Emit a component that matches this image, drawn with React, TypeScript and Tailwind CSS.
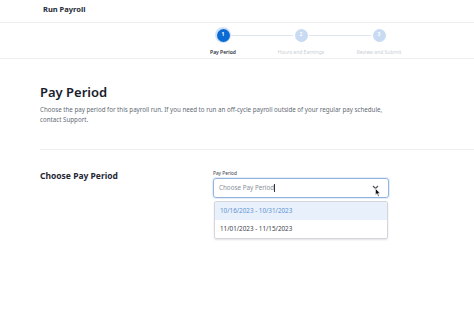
export default function App() {
  const steps = [
    { n: 1, label: "Pay Period", active: true },
    { n: 2, label: "Hours and Earnings", active: false },
    { n: 3, label: "Review and Submit", active: false },
  ];

  return (
    <div className="w-[474px] h-[316px] bg-white overflow-hidden font-['Noto_Sans',sans-serif] text-[#1c2431]">
      {/* header */}
      <header className="h-[23px] border-b border-[#eceef1] pl-[43px] pt-[4px] flex items-start">
        <span className="text-[7.5px] font-bold leading-[11px] text-[#232a36]">Run Payroll</span>
      </header>

      {/* stepper */}
      <div className="h-[36px] border-b border-[#eceef1] pl-[184px] flex">
        {steps.map((s, i) => (
          <div key={s.n} className="w-[78px] flex flex-col items-center pt-[4px]">
            <div className="w-full flex items-center">
              <div className={`flex-1 h-px ${i === 0 ? "bg-transparent" : "bg-[#dfe5ed]"}`} />
              <div
                className={`w-[16px] h-[16px] rounded-full flex items-center justify-center ${
                  s.active ? "bg-[#d3e4f8]" : "bg-transparent"
                }`}
              >
                <div
                  className={`w-[13px] h-[13px] rounded-full flex items-center justify-center text-[5px] font-bold text-white ${
                    s.active ? "bg-[#0b6bd4]" : "bg-[#c8dbf2]"
                  }`}
                >
                  {s.n}
                </div>
              </div>
              <div className={`flex-1 h-px ${i === steps.length - 1 ? "bg-transparent" : "bg-[#dfe5ed]"}`} />
            </div>
            <span
              className={`mt-[6px] text-[5px] leading-[7px] whitespace-nowrap ${
                s.active ? "font-semibold text-[#2a313c]" : "text-[#c9ced5]"
              }`}
            >
              {s.label}
            </span>
          </div>
        ))}
      </div>

      {/* main */}
      <main className="pl-[40px]">
        <h1 className="mt-[25px] text-[13px] leading-[16px] font-semibold text-[#18202c]">Pay Period</h1>
        <p className="mt-[5px] w-[360px] text-[6.2px] leading-[10px] text-[#646b76]">
          Choose the pay period for this payroll run. If you need to run an off-cycle payroll outside of your regular pay
          schedule, contact Support.
        </p>
        <div className="mt-[24px] border-t border-[#eceef1]" />

        <div className="flex mt-[20px]">
          <div className="w-[173px] text-[8.5px] leading-[11px] font-bold text-[#1f2733]">Choose Pay Period</div>
          <div className="w-[176px]">
            <div className="text-[4.8px] leading-[7px] text-[#3a414c]">Pay Period</div>
            <div className="relative mt-[1px] h-[20px] rounded-[3px] border-[1.5px] border-[#94b6de] shadow-[0_0_0_1px_#e3edf8] flex items-center pl-[5px]">
              <span className="text-[6.3px] text-[#8a9099]">Choose Pay Period</span>
              <span className="w-px h-[8px] bg-[#333]" />
              <svg className="absolute right-[9px] top-[6px]" width="7" height="5" viewBox="0 0 7 5">
                <path d="M1 1 L3.5 3.5 L6 1" fill="none" stroke="#4b525c" strokeWidth="1.2" />
              </svg>
              <svg className="absolute right-[7px] top-[9px]" width="6" height="9" viewBox="0 0 6 9">
                <path d="M0.5 0.5 L0.5 7 L2 5.6 L3.2 8.3 L4.2 7.9 L3 5.2 L5 5.2 Z" fill="#111" stroke="#fff" strokeWidth="0.5" />
              </svg>
            </div>
            <div className="mt-[3px] ml-[1px] w-[174px] rounded-[2px] border border-[#d3d7dc] shadow-[0_1px_2px_rgba(0,0,0,0.12)] overflow-hidden">
              <div className="h-[18px] bg-[#e7f0fb] flex items-center pl-[5px] text-[6.3px] text-[#5f93d2]">
                10/16/2023 - 10/31/2023
              </div>
              <div className="h-[18px] flex items-center pl-[5px] text-[6.3px] text-[#3b424c]">
                11/01/2023 - 11/15/2023
              </div>
            </div>
          </div>
        </div>
      </main>
    </div>
  );
}
